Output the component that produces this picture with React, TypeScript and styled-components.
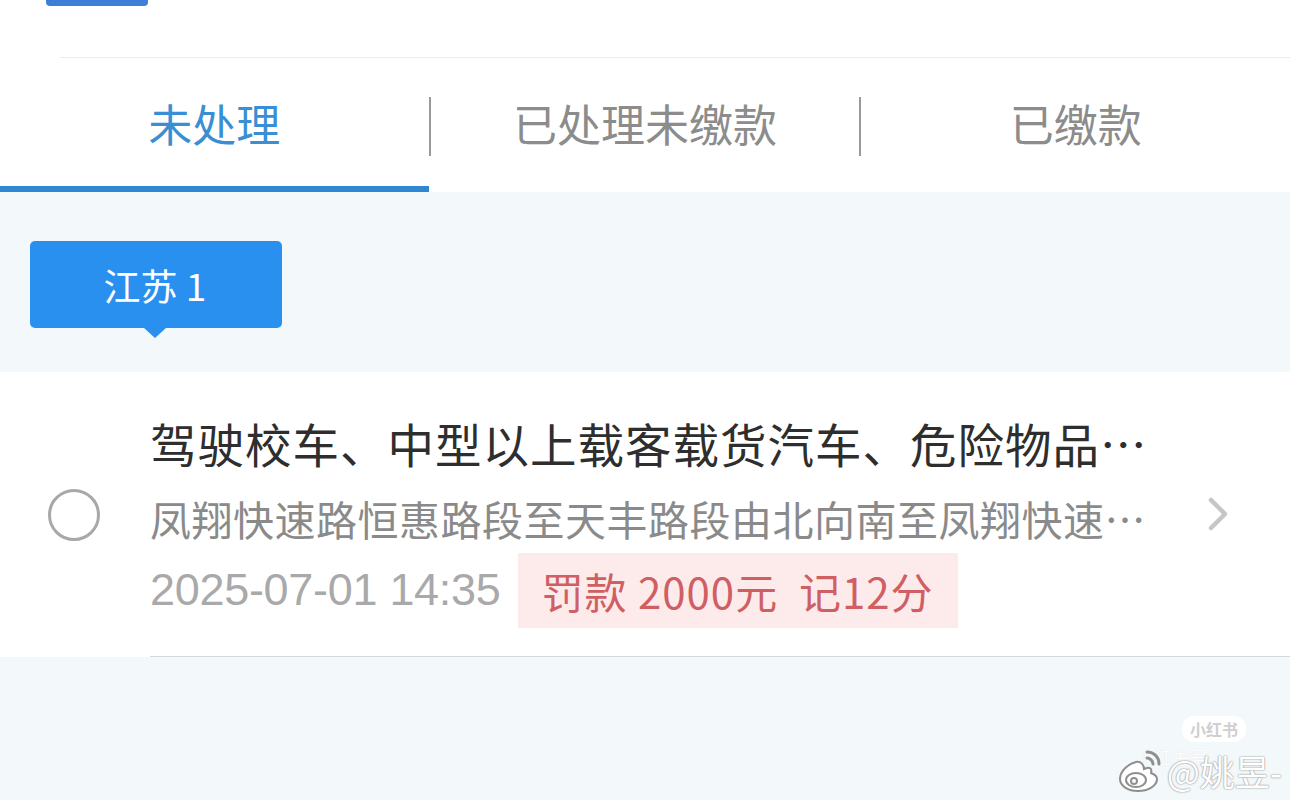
import { ReactElement } from "react";
import styled, { createGlobalStyle } from "styled-components";

const GlobalStyle = createGlobalStyle`
  html, body {
    margin: 0;
    padding: 0;
    background: #f3f8fa;
  }
  body {
    font-family: "Noto Sans CJK SC", "Noto Sans", sans-serif;
  }
`;

const Page = styled.div`
  position: relative;
  width: 1290px;
  height: 800px;
  overflow: hidden;
  background: #f3f8fa;
`;

const Header = styled.div`
  background: #ffffff;
`;

const TopStrip = styled.div`
  height: 58px;
  margin-left: 60px;
  border-bottom: 1px solid #ececec;
  box-sizing: border-box;
`;

const TopNub = styled.div`
  width: 102px;
  height: 6px;
  margin-left: -14px;
  border-radius: 0 0 4px 4px;
  background: #3b80d6;
`;

const Tabs = styled.div`
  display: flex;
  height: 134px;
`;

const Tab = styled.div<{ active?: boolean }>`
  flex: 1;
  display: flex;
  align-items: center;
  justify-content: center;
  font-size: 44px;
  color: ${(p) => (p.active ? "#3a8ed4" : "#8c8c8c")};
  border-bottom: 6px solid ${(p) => (p.active ? "#2f87d2" : "transparent")};
  box-sizing: border-box;
  padding-top: 2px;
`;

const Divider = styled.div`
  width: 2px;
  height: 59px;
  margin-top: 39px;
  background: #9a9a9a;
`;

const TagArea = styled.div`
  height: 180px;
  padding: 49px 30px 0;
  box-sizing: border-box;
`;

const RegionTag = styled.div`
  position: relative;
  width: 252px;
  height: 87px;
  border-radius: 5px;
  background: #2a90f0;
  color: #ffffff;
  font-size: 37px;
  display: flex;
  align-items: center;
  justify-content: center;
  padding-right: 2px;
  box-sizing: border-box;

  &::after {
    content: "";
    position: absolute;
    left: 114px;
    bottom: -10px;
    border-left: 11px solid transparent;
    border-right: 11px solid transparent;
    border-top: 10px solid #2a90f0;
  }
`;

const Card = styled.div`
  display: flex;
  align-items: center;
  background: #ffffff;
  height: 285px;
`;

const CheckCol = styled.div`
  width: 150px;
  flex-shrink: 0;
  display: flex;
  padding-left: 48px;
  box-sizing: border-box;
`;

const Circle = styled.div`
  width: 52px;
  height: 52px;
  border-radius: 50%;
  border: 3px solid #a8a8a8;
  box-sizing: border-box;
`;

const Body = styled.div`
  flex: 1;
  align-self: stretch;
  display: flex;
  align-items: center;
  border-bottom: 1px solid #d3d9db;
`;

const TextCol = styled.div`
  width: 1000px;
  padding: 41px 0 29px;
  box-sizing: border-box;
`;

const Title = styled.div`
  height: 60px;
  line-height: 60px;
  font-size: 46.5px;
  letter-spacing: 1px;
  color: #2e2e2e;
  white-space: nowrap;
  overflow: hidden;
  text-overflow: ellipsis;
  margin-bottom: 15px;
`;

const SubLine = styled.div`
  height: 60px;
  line-height: 60px;
  font-size: 41px;
  letter-spacing: 0.5px;
  color: #8a8a8a;
  white-space: nowrap;
  overflow: hidden;
  text-overflow: ellipsis;
  margin-bottom: 5px;
`;

const MetaRow = styled.div`
  display: flex;
  align-items: center;
  height: 75px;
  gap: 17px;
`;

const DateText = styled.span`
  font-family: "Liberation Sans", "Noto Sans", sans-serif;
  font-size: 45px;
  color: #a9a9a9;
  letter-spacing: -0.3px;
`;

const Penalty = styled.span`
  height: 75px;
  display: flex;
  align-items: center;
  padding: 0 24px;
  background: #fdebec;
  color: #cf5f63;
  font-size: 42px;
  letter-spacing: 1px;
  white-space: pre;
`;

const Chevron = styled.svg`
  margin-left: 56px;
  width: 26px;
  height: 40px;
`;

const Watermark = styled.div`
  position: absolute;
  right: 8px;
  bottom: 4px;
  display: flex;
  align-items: center;
  gap: 4px;
  color: #ffffff;
  font-size: 35px;
  text-shadow: 0 0 2px #9a9a9a, 0 0 1px #888;
`;

const SmallMark = styled.div`
  position: absolute;
  right: 44px;
  bottom: 58px;
  padding: 1px 8px;
  border-radius: 12px;
  background: #ffffff;
  color: #cfcfcf;
  font-size: 16px;
  font-weight: bold;
`;

const FaintMark = styled.div`
  position: absolute;
  right: 60px;
  bottom: 30px;
  color: #ffffff;
  font-size: 18px;
  opacity: 0.9;
  text-shadow: 0 0 1px #d8dde0;
`;

function WeiboLogo(): ReactElement {
  return (
    <svg width="46" height="46" viewBox="0 0 46 46">
      <g fill="#ffffff" stroke="#8f8f8f" strokeWidth="2">
        <path d="M19 14c-8 2-16 9-16 17 0 7 8 12 18 12s19-5 19-12c0-4-4-5-6-6 1-3 0-6-4-5l-3 1c0-4-3-8-8-7z" />
        <ellipse cx="19" cy="32" rx="10" ry="7" />
        <circle cx="17" cy="33" r="3" />
      </g>
      <g fill="none" stroke="#8f8f8f" strokeWidth="3" strokeLinecap="round">
        <path d="M30 4c7 0 12 5 12 12" />
        <path d="M30 10c3 0 6 3 6 6" />
      </g>
    </svg>
  );
}

export default function App(): ReactElement {
  return (
    <Page>
      <GlobalStyle />
      <Header>
        <TopStrip>
          <TopNub />
        </TopStrip>
        <Tabs>
          <Tab active>未处理</Tab>
          <Divider />
          <Tab>已处理未缴款</Tab>
          <Divider />
          <Tab>已缴款</Tab>
        </Tabs>
      </Header>

      <TagArea>
        <RegionTag>江苏 1</RegionTag>
      </TagArea>

      <Card>
        <CheckCol>
          <Circle />
        </CheckCol>
        <Body>
          <TextCol>
            <Title>驾驶校车、中型以上载客载货汽车、危险物品运输车辆以外的机动车超过规定时速50%以上的</Title>
            <SubLine>凤翔快速路恒惠路段至天丰路段由北向南至凤翔快速路天丰路段</SubLine>
            <MetaRow>
              <DateText>2025-07-01 14:35</DateText>
              <Penalty>罚款 2000元  记12分</Penalty>
            </MetaRow>
          </TextCol>
          <Chevron viewBox="0 0 26 40">
            <path
              d="M5 6l14 14-14 14"
              fill="none"
              stroke="#c6c6c6"
              strokeWidth="4.5"
              strokeLinecap="round"
              strokeLinejoin="round"
            />
          </Chevron>
        </Body>
      </Card>

      <SmallMark>小红书</SmallMark>
      <FaintMark>小红书号 ·</FaintMark>
      <Watermark>
        <WeiboLogo />
        <span>@姚昱-</span>
      </Watermark>
    </Page>
  );
}
